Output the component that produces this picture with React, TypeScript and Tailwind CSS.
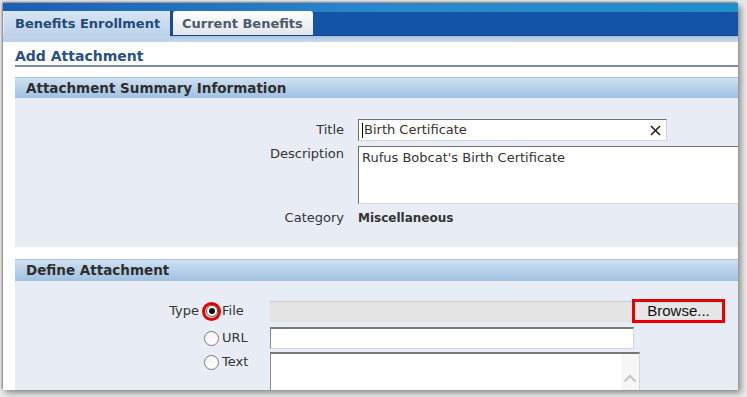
function Radio({ checked = false }: { checked?: boolean }) {
  return (
    <span className="w-[15px] h-[15px] rounded-full border border-[#7a7a7a] bg-linear-to-b from-[#f4f4f4] to-white flex items-center justify-center shrink-0">
      {checked && <span className="w-[7px] h-[7px] rounded-full bg-[#111]" />}
    </span>
  );
}

export default function App() {
  return (
    <div className="w-[747px] h-[397px] bg-[#e9e9e9] pl-[3px] pt-[3px] overflow-hidden">
      <div className="w-[735px] h-[387px] bg-white overflow-hidden shadow-[-1px_-1px_2px_rgba(0,0,0,0.45),3px_3px_6px_rgba(0,0,0,0.4)] font-['DejaVu_Sans',sans-serif] text-[13px] text-[#333]">
        {/* Header with tabs */}
        <div className="h-[9px] bg-linear-to-r from-[#1b5fb4] via-[#2a86cc] to-[#1e90c9]" />
        <div className="h-[24px] bg-[#1354a6] flex items-end border-b border-[#0f468f]">
          <div className="w-[167px] h-[24px] bg-linear-to-b from-[#d7e5f4] to-[#bed3ea] pl-[11px] pt-[2px] flex items-center font-bold text-[#244a7c] border-l border-[#e2ecf7]">
            Benefits Enrollment
          </div>
          <div className="w-[3px] h-[24px] bg-[#1a4a8c]" />
          <div className="w-[140px] h-[24px] rounded-t-[3px] bg-linear-to-b from-white to-[#e2e5ea] pl-[9px] pt-[2px] flex items-center font-bold text-[#4b5b6e]">
            Current Benefits
          </div>
        </div>
        <div className="h-[6px] bg-linear-to-b from-[#a9c2de] to-[#cbdcef] relative">
          <div className="absolute left-0 top-[-1px] w-[167px] h-[7px] bg-[#bfd3ea]" />
        </div>

        {/* Page title */}
        <div className="ml-[12px] mt-[5px] border-b-2 border-[#7a8ca6] leading-[18px] font-bold text-[14px] text-[#2b5081]">
          Add Attachment
        </div>

        {/* Attachment Summary Information */}
        <div className="ml-[12px] mt-[10px]">
          <div className="h-[21px] border-t border-[#a9c3df] bg-linear-to-b from-[#d0e0f1] to-[#a0c1e2] pl-[11px] leading-[20px] font-bold text-[13.5px] text-[#2e2e2e]">
            Attachment Summary Information
          </div>
          <div className="h-[149px] bg-[#e8edf5] pt-[21px]">
            <div className="flex items-center h-[22px]">
              <div className="w-[329px] text-right">Title</div>
              <div className="ml-[14px] w-[309px] h-[22px] bg-white border border-t-[#6f6f6f] border-l-[#6f6f6f] border-r-[#d6d6d6] border-b-[#d6d6d6] flex items-center pl-[3px] relative">
                <span className="w-px h-[15px] bg-black" />
                <span className="ml-px">Birth Certificate</span>
                <svg className="absolute right-[5px] top-[5px]" width="11" height="11" viewBox="0 0 11 11">
                  <path d="M1 1L10 10M10 1L1 10" stroke="#222" strokeWidth="1.6" />
                </svg>
              </div>
            </div>
            <div className="flex items-start mt-[5px]">
              <div className="w-[329px] text-right leading-[16px]">Description</div>
              <div className="ml-[14px] flex-1 h-[58px] bg-white border border-t-[#6f6f6f] border-l-[#6f6f6f] border-r-0 border-b-[#d6d6d6] pl-[3px] pt-[2px] leading-[18px]">
                Rufus Bobcat's Birth Certificate
              </div>
            </div>
            <div className="flex items-center h-[22px] mt-[3px]">
              <div className="w-[329px] text-right">Category</div>
              <div className="ml-[14px] font-bold text-[12px]">Miscellaneous</div>
            </div>
          </div>
        </div>

        {/* Define Attachment */}
        <div className="ml-[12px] mt-[12px]">
          <div className="h-[22px] border-t border-[#a9c3df] bg-linear-to-b from-[#d0e0f1] to-[#a0c1e2] pl-[11px] leading-[21px] font-bold text-[13.5px] text-[#2e2e2e]">
            Define Attachment
          </div>
          <div className="h-[120px] bg-[#e8edf5] pt-[18px]">
            <div className="flex items-center h-[24px]">
              <div className="w-[184px] text-right">Type</div>
              <div className="w-[68px] ml-[3px] flex items-center">
                <span className="w-[19px] h-[19px] rounded-full border-[3px] border-[#e30000] flex items-center justify-center">
                  <span className="w-[12px] h-[12px] rounded-full bg-white border border-[#555] flex items-center justify-center">
                    <span className="w-[6px] h-[6px] rounded-full bg-[#111]" />
                  </span>
                </span>
                <span className="ml-[1px]">File</span>
              </div>
              <div className="w-[362px] h-[21px] bg-[#e4e4e4] border-t border-[#cdcdcd]" />
              <div className="w-[93px] h-[24px] border-[3px] border-[#e80000] bg-[#e6e6e6] flex items-center justify-center font-['Liberation_Sans',sans-serif] text-[15px] text-[#111]">
                Browse...
              </div>
            </div>
            <div className="flex items-center h-[22px] mt-[4px]">
              <div className="w-[189px]" />
              <div className="w-[66px] flex items-center">
                <Radio />
                <span className="ml-[3px]">URL</span>
              </div>
              <div className="w-[364px] h-[22px] bg-white border border-t-2 border-t-[#777] border-l-[#8a8a8a] border-r-[#d6d6d6] border-b-[#d6d6d6]" />
            </div>
            <div className="flex items-start mt-[3px]">
              <div className="w-[189px]" />
              <div className="w-[66px] flex items-center h-[20px]">
                <Radio />
                <span className="ml-[3px]">Text</span>
              </div>
              <div className="w-[370px] h-[60px] bg-white border border-t-2 border-t-[#777] border-l-[#8a8a8a] border-r-[#d6d6d6] border-b-0 flex justify-end">
                <div className="w-[18px] bg-[#f6f6f6] flex justify-center pt-[20px]">
                  <svg width="14" height="9" viewBox="0 0 14 9">
                    <path d="M1.5 7.5L7 2L12.5 7.5" stroke="#c4c4c4" strokeWidth="2" fill="none" />
                  </svg>
                </div>
              </div>
            </div>
          </div>
        </div>
      </div>
    </div>
  );
}
